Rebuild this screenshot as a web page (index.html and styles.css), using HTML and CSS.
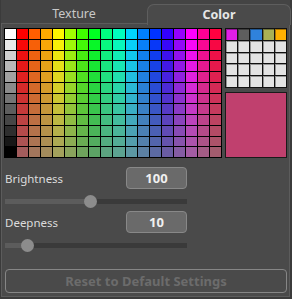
FILE: index.html
```html
<!DOCTYPE html>
<html lang="en">
<head>
    <meta charset="UTF-8">
    <title>Color</title>
    <link rel="stylesheet" href="styles.css">
</head>
<body>
    <div class="window">
        <div class="tabs">
            <div class="tab">Texture</div>
            <div class="tab active">Color</div>
        </div>
        <div class="panel">
            <div class="colors">
                <div class="spectrum" id="spectrum"></div>
                <div class="side">
                    <div class="palette" id="palette"></div>
                    <div class="current"></div>
                </div>
            </div>

            <div class="param">
                <span class="label">Brightness</span>
                <span class="value">100</span>
            </div>
            <div class="slider">
                <div class="fill" style="width: 86px"></div>
                <div class="thumb" style="left: 79px"></div>
            </div>

            <div class="param">
                <span class="label">Deepness</span>
                <span class="value">10</span>
            </div>
            <div class="slider">
                <div class="fill" style="width: 23px"></div>
                <div class="thumb" style="left: 16px"></div>
            </div>

            <button class="reset" disabled>Reset to Default Settings</button>
        </div>
    </div>
    <script src="app.js"></script>
</body>
</html>
```

FILE: styles.css
```css
body {
    margin: 0;
    background: #3b3b3b;
    font-family: "Noto Sans", "Open Sans", sans-serif;
    width: 292px;
    height: 299px;
    overflow: hidden;
}
.window {
    padding: 0 2px 2px 1px;
}
.tabs {
    display: flex;
    height: 23px;
    padding-top: 4px;
    box-sizing: border-box;
    background: #444;
}
.tab {
    flex: 0 0 146px;
    text-align: center;
    font-size: 12.5px;
    line-height: 20px;
    color: #c8c8c8;
}
.tab.active {
    flex: 0 0 142px;
    background: #4a4a4a;
    color: #e6e6e6;
    font-weight: bold;
    border: 1px solid #5e5e5e;
    border-bottom: none;
    border-radius: 7px 7px 0 0;
    height: 20px;
    position: relative;
    z-index: 1;
}
.panel {
    background: #4a4a4a;
    border: 1px solid #5c5c5c;
    padding: 4px 2px 3px 2px;
}
.colors {
    display: flex;
    gap: 3px;
}
.spectrum {
    display: grid;
    grid-template-columns: repeat(18, 1fr);
    grid-template-rows: repeat(12, 1fr);
    gap: 1px;
    padding: 1px;
    background: #000;
    width: 216px;
    height: 128px;
}
.side {
    display: flex;
    flex-direction: column;
    gap: 4px;
    width: 62px;
}
.palette {
    display: grid;
    grid-template-columns: repeat(5, 1fr);
    grid-template-rows: repeat(5, 1fr);
    gap: 1px;
    padding: 1px;
    background: #111;
    height: 58px;
}
.palette div {
    box-shadow: inset 1px 1px 0 rgba(0,0,0,0.35);
}
.current {
    flex: 1;
    background: #c0406e;
    border: 1px solid #1a1a1a;
}
.param {
    display: flex;
    align-items: center;
    justify-content: space-between;
    margin-top: 9px;
    width: 182px;
    padding-left: 1px;
    height: 22px;
}
.param + .slider + .param {
    margin-top: 3px;
}
.label {
    font-size: 11.5px;
    color: #dcdcdc;
}
.value {
    width: 59px;
    height: 20px;
    line-height: 20px;
    text-align: center;
    background: #6a6a6a;
    border: 1px solid #888;
    border-radius: 4px;
    color: #f0f0f0;
    font-size: 13px;
    font-weight: bold;
}
.slider {
    position: relative;
    margin: 6px 0 0 1px;
    width: 182px;
    height: 13px;
}
.slider::before {
    content: "";
    position: absolute;
    left: 0;
    right: 0;
    top: 4px;
    height: 5px;
    background: #3a3a3a;
}
.fill {
    position: absolute;
    left: 0;
    top: 4px;
    height: 5px;
    background: #5c5c5c;
}
.thumb {
    position: absolute;
    top: 0;
    width: 13px;
    height: 13px;
    border-radius: 50%;
    background: #8c8c8c;
}
.reset {
    display: block;
    margin: 17px 0 0 1px;
    width: 282px;
    height: 24px;
    background: transparent;
    border: 1px solid #868686;
    border-radius: 4px;
    color: #6c6c6c;
    font-family: inherit;
    font-size: 13px;
    font-weight: bold;
}
```

FILE: app.js
```js
const hues = [0, 22, 40, 58, 82, 105, 128, 150, 165, 190, 210, 228, 252, 275, 300, 325, 345];
const spectrum = document.getElementById('spectrum');

for (let row = 0; row < 12; row++) {
    const gray = Math.round(255 * (1 - row / 11));
    const cell = document.createElement('div');
    cell.style.background = `rgb(${gray}, ${gray}, ${gray})`;
    spectrum.appendChild(cell);

    const sat = 100 - row * 72 / 11;
    hues.forEach(h => {
        const c = document.createElement('div');
        c.style.background = `hsl(${h}, ${sat}%, 50%)`;
        spectrum.appendChild(c);
    });
}

const recent = ['#e01ee8', '#5e5e5e', '#2f82dc', '#a9b055', '#ffb000'];
const palette = document.getElementById('palette');

for (let i = 0; i < 25; i++) {
    const c = document.createElement('div');
    c.style.background = recent[i] || '#e4e4e4';
    palette.appendChild(c);
}
```
